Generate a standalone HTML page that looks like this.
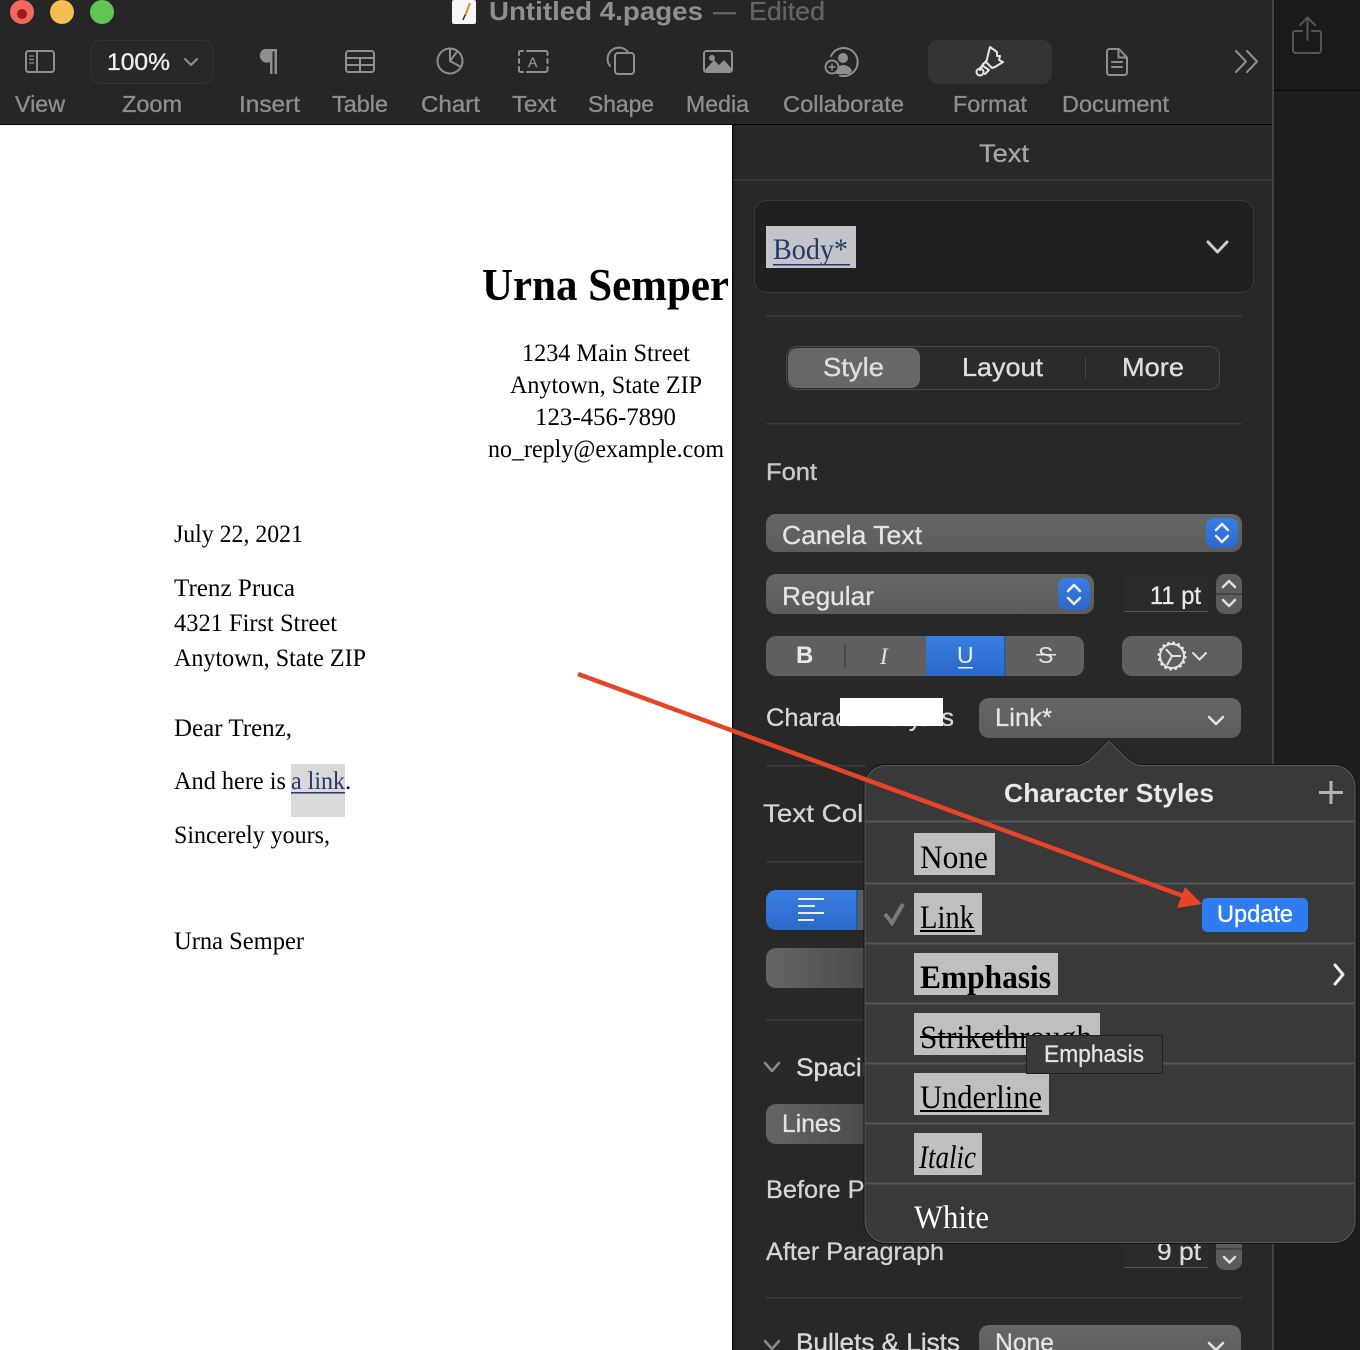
<!DOCTYPE html>
<html><head><meta charset="utf-8"><style>
html,body{margin:0;padding:0;background:#222;width:1360px;height:1350px;overflow:hidden}
svg{display:block}
.s{font-family:"Liberation Sans",sans-serif}
.r{font-family:"Liberation Serif",serif}
.i{fill:none;stroke:#8f8f8f;stroke-width:2;stroke-linecap:round;stroke-linejoin:round}
</style></head><body>
<svg width="1360" height="1350" viewBox="0 0 1360 1350" xmlns="http://www.w3.org/2000/svg">
<defs>
<linearGradient id="fade" x1="0" x2="1" y1="0" y2="0"><stop offset="0" stop-color="#656565"/><stop offset="1" stop-color="#484848"/></linearGradient>
<linearGradient id="blue" x1="0" x2="0" y1="0" y2="1"><stop offset="0" stop-color="#3a7ee2"/><stop offset="1" stop-color="#2a69c8"/></linearGradient>
<linearGradient id="ctl" x1="0" x2="0" y1="0" y2="1"><stop offset="0" stop-color="#666"/><stop offset="1" stop-color="#5c5c5c"/></linearGradient>
</defs>
<!-- backgrounds -->
<rect width="1360" height="1350" fill="#1f1f1f"/>
<rect x="1274" y="0" width="86" height="90" fill="#1a1a1a"/>
<rect x="1274" y="90" width="86" height="1" fill="#050505"/>
<rect x="1274" y="91" width="86" height="1259" fill="#1e1e1e"/>
<rect x="0" y="0" width="1273" height="124" fill="#262626"/>
<rect x="0" y="124" width="1273" height="1.5" fill="#050505"/>
<rect x="0" y="125" width="732" height="1225" fill="#fff"/>
<rect x="732" y="125" width="541" height="1225" fill="#282828"/>
<rect x="732" y="125" width="1.5" height="1225" fill="#0a0a0a"/>
<rect x="1272" y="0" width="2" height="1350" fill="#454545"/>

<!-- traffic lights -->
<circle cx="22" cy="12" r="12" fill="#f06a5f"/><circle cx="22" cy="14" r="5" fill="#9c1c12"/>
<circle cx="62" cy="12" r="12" fill="#f6bd50"/>
<circle cx="102" cy="12" r="12" fill="#61c554"/>
<!-- title -->
<rect x="452" y="0" width="24" height="24" rx="2" fill="#f6f6f6"/>
<path d="M465 16 L470 3" stroke="#e08a2c" stroke-width="2"/><path d="M463 20 L465 15" stroke="#333" stroke-width="1.5"/>
<g class="s">
<text x="489" y="20" font-size="26" font-weight="700" fill="#8f8f8f" textLength="214" lengthAdjust="spacingAndGlyphs">Untitled 4.pages</text>
<rect x="713" y="12" width="23" height="2.5" fill="#5e5e5e"/>
<text x="749" y="20" font-size="26" fill="#636363" stroke="#636363" stroke-width=".3" textLength="76" lengthAdjust="spacingAndGlyphs">Edited</text>
</g>

<!-- toolbar boxes -->
<rect x="90.500" y="40.500" width="123" height="43" rx="10" fill="#282828" stroke="#343434"/>
<rect x="928" y="40" width="124" height="44" rx="10" fill="#343434"/>
<g class="s">
<text x="107" y="70" font-size="24" fill="#eee" stroke="#eee" stroke-width=".35" textLength="63" lengthAdjust="spacingAndGlyphs">100%</text>
<g font-size="23" fill="#8e8e8e" stroke="#8e8e8e" stroke-width=".35">
<text x="15" y="112" textLength="50" lengthAdjust="spacingAndGlyphs">View</text>
<text x="122" y="112" textLength="60" lengthAdjust="spacingAndGlyphs">Zoom</text>
<text x="239" y="112" textLength="61" lengthAdjust="spacingAndGlyphs">Insert</text>
<text x="332" y="112" textLength="56" lengthAdjust="spacingAndGlyphs">Table</text>
<text x="421" y="112" textLength="59" lengthAdjust="spacingAndGlyphs">Chart</text>
<text x="512" y="112" textLength="44" lengthAdjust="spacingAndGlyphs">Text</text>
<text x="588" y="112" textLength="66" lengthAdjust="spacingAndGlyphs">Shape</text>
<text x="686" y="112" textLength="63" lengthAdjust="spacingAndGlyphs">Media</text>
<text x="783" y="112" textLength="121" lengthAdjust="spacingAndGlyphs">Collaborate</text>
<text x="953" y="112" textLength="74" lengthAdjust="spacingAndGlyphs">Format</text>
<text x="1062" y="112" textLength="107" lengthAdjust="spacingAndGlyphs">Document</text>
</g></g>

<!-- toolbar icons -->
<g class="i">
<rect x="26" y="51" width="28" height="21" rx="2.500"/><path d="M37 51V72"/><path d="M29.500 56h4M29.500 59.500h4M29.500 63h4" stroke-width="1.300"/>
<path d="M185 59l6 6 6-6"/>
<rect x="346" y="51" width="28" height="21" rx="2.500"/><path d="M346 58h28M346 65h28M360 58v14"/>
<circle cx="450" cy="61" r="12.500"/><path d="M450 61V48.500M450 61l11 6M450 61l7.500-10"/>
<path d="M523 51h-2.500a1.500 1.500 0 0 0-1.500 1.500V55M519 59v4M519 67v3.500a1.500 1.500 0 0 0 1.500 1.500H523M527 51h18.500a2 2 0 0 1 2 2V55M547.500 59v4M547.500 67v3a2 2 0 0 1-2 2H527" />
<path d="M610 66a11 11 0 1 1 18-14"/><rect x="615" y="53" width="19" height="21" rx="3"/>
<rect x="704" y="51" width="28" height="21" rx="2.500"/>
<path d="M1107 51.500a2.500 2.500 0 0 1 2.500-2.500H1119l8 8.500v15a2.500 2.500 0 0 1-2.500 2.500h-15a2.500 2.500 0 0 1-2.500-2.500ZM1118.500 49v8.500h8.500M1112 62h10M1112 67h10"/>
<path d="M1236 51l10 10.500-10 10.500M1247 51l10 10.500-10 10.500"/>
</g>
<path d="M264 49h13v25h-2.500V51.500h-2V74H270V62a6.500 6.500 0 0 1 -6-13Z" fill="#8f8f8f"/>
<text class="s" x="528" y="67" font-size="14" fill="#8f8f8f" stroke="#8f8f8f" stroke-width=".3">A</text>
<path d="M705 70l9-10 5 5 5-5 7 8v3h-26Z" fill="#8f8f8f"/><circle cx="712" cy="58" r="3" fill="#8f8f8f"/>
<g class="i"><path d="M831 56a14 14 0 1 1 9 19.500"/></g>
<circle cx="843" cy="58" r="5" fill="#8f8f8f"/><path d="M836 74c0-6 4-9 7-9s8 2 9 6l-3 3Z" fill="#8f8f8f"/>
<circle cx="832" cy="67" r="6.500" fill="#262626" stroke="#8f8f8f" stroke-width="2"/><path d="M832 63.500v7M828.500 67h7" stroke="#8f8f8f" stroke-width="1.500"/>
<g fill="none" stroke="#e6e6e6" stroke-width="2" stroke-linejoin="round" stroke-linecap="round">
<path d="M990 47l-3 12-1 3 6 6 3-1 8-5-4-2 1-4-3 0 0-4ZM986 62l-3 2-3 6"/><path d="M987 60l-7 8"/><circle cx="980" cy="72" r="3.500"/><path d="M983 66l6 4-4 4"/>
</g>
<g fill="none" stroke="#555" stroke-width="2" stroke-linecap="round" stroke-linejoin="round">
<path d="M1302 31h-7a2 2 0 0 0-2 2v17a3 3 0 0 0 3 3h22a3 3 0 0 0 3-3V33a2 2 0 0 0-2-2h-7M1307.500 40V18M1300 25l7.500-7.500 7.500 7.500"/>
</g>

<!-- document -->
<g class="r" fill="#000">
<text x="482" y="300" font-size="46" font-weight="700" textLength="247" lengthAdjust="spacingAndGlyphs">Urna Semper</text>
<g font-size="25">
<text x="522" y="361" textLength="168" lengthAdjust="spacingAndGlyphs">1234 Main Street</text>
<text x="510" y="393" textLength="192" lengthAdjust="spacingAndGlyphs">Anytown, State ZIP</text>
<text x="535" y="425" textLength="141" lengthAdjust="spacingAndGlyphs">123-456-7890</text>
<text x="488" y="457" textLength="236" lengthAdjust="spacingAndGlyphs">no_reply@example.com</text>
<text x="174" y="542" textLength="129" lengthAdjust="spacingAndGlyphs">July 22, 2021</text>
<text x="174" y="596" textLength="121" lengthAdjust="spacingAndGlyphs">Trenz Pruca</text>
<text x="174" y="631" textLength="163" lengthAdjust="spacingAndGlyphs">4321 First Street</text>
<text x="174" y="666" textLength="192" lengthAdjust="spacingAndGlyphs">Anytown, State ZIP</text>
<text x="174" y="736" textLength="118" lengthAdjust="spacingAndGlyphs">Dear Trenz,</text>
<rect x="291" y="764" width="54" height="53" fill="#d9d9d9"/>
<text x="174" y="789" textLength="112" lengthAdjust="spacingAndGlyphs">And here is</text>
<text x="291" y="789" fill="#25386b" textLength="54" lengthAdjust="spacingAndGlyphs">a link</text>
<rect x="291" y="792" width="54" height="1.500" fill="#25386b"/>
<text x="345" y="789">.</text>
<text x="174" y="843" textLength="156" lengthAdjust="spacingAndGlyphs">Sincerely yours,</text>
<text x="174" y="949" textLength="130" lengthAdjust="spacingAndGlyphs">Urna Semper</text>
</g></g>

<!-- sidebar -->
<g class="s">
<text x="979" y="162" font-size="25" fill="#a6a6a6" stroke="#a6a6a6" stroke-width=".3" textLength="50" lengthAdjust="spacingAndGlyphs">Text</text>
<rect x="733" y="179" width="540" height="1.500" fill="#3b3b3b"/>
<rect x="754.500" y="200.500" width="499" height="92" rx="12" fill="#202020" stroke="#3a3a3a"/>
<rect x="766" y="226" width="90" height="42" fill="#c3c5ca"/>
<text x="773" y="259" font-size="30" fill="#25386b" style="font-family:'Liberation Serif',serif" textLength="75" lengthAdjust="spacingAndGlyphs">Body*</text>
<rect x="773" y="264" width="77" height="1.500" fill="#25386b"/>
<path d="M1208 242l9.500 10 9.500-10" fill="none" stroke="#ccc" stroke-width="3" stroke-linecap="round" stroke-linejoin="round"/>
<rect x="766" y="315" width="476" height="1.500" fill="#3b3b3b"/>

<rect x="786.500" y="346.500" width="433" height="43" rx="10" fill="#2b2b2b" stroke="#4a4a4a"/>
<rect x="788" y="348" width="132" height="40" rx="9" fill="#676767"/>
<rect x="1085" y="357" width="1" height="22" fill="#444"/>
<g font-size="26" fill="#dedede" stroke="#dedede" stroke-width=".35">
<text x="823" y="376" textLength="61" lengthAdjust="spacingAndGlyphs">Style</text>
<text x="962" y="376" textLength="81" lengthAdjust="spacingAndGlyphs">Layout</text>
<text x="1122" y="376" textLength="62" lengthAdjust="spacingAndGlyphs">More</text>
</g>
<rect x="766" y="423" width="476" height="1.500" fill="#3b3b3b"/>
<g stroke-width=".4">
<text x="766" y="480" font-size="24" fill="#c8c8c8" stroke="#c8c8c8" textLength="51" lengthAdjust="spacingAndGlyphs">Font</text>
</g>

<rect x="766" y="514" width="476" height="38" rx="10" fill="url(#ctl)"/>
<text x="782" y="544" font-size="26" fill="#e4e4e4" stroke="#e4e4e4" stroke-width=".3" textLength="140" lengthAdjust="spacingAndGlyphs">Canela Text</text>
<rect x="1206" y="518" width="32" height="30" rx="8" fill="url(#blue)"/>
<path d="M1216 530l6-6 6 6M1216 536l6 6 6-6" fill="none" stroke="#eee" stroke-width="2.500" stroke-linecap="round" stroke-linejoin="round"/>

<rect x="766" y="574" width="328" height="40" rx="10" fill="url(#ctl)"/>
<text x="782" y="605" font-size="26" fill="#e4e4e4" stroke="#e4e4e4" stroke-width=".3" textLength="92" lengthAdjust="spacingAndGlyphs">Regular</text>
<rect x="1058" y="578" width="32" height="32" rx="8" fill="url(#blue)"/>
<path d="M1068 591l6-6 6 6M1068 598l6 6 6-6" fill="none" stroke="#eee" stroke-width="2.500" stroke-linecap="round" stroke-linejoin="round"/>

<rect x="1124" y="576" width="84" height="36" fill="#2b2b2b"/><rect x="1124" y="611" width="84" height="1" fill="#555"/>
<text x="1150" y="604" font-size="25" fill="#eaeaea" stroke="#eaeaea" stroke-width=".3" textLength="51" lengthAdjust="spacingAndGlyphs">11 pt</text>
<rect x="1216" y="574" width="26" height="40" rx="9" fill="#5c5c5c"/><rect x="1216" y="593" width="26" height="2" fill="#444"/>
<path d="M1223 587l6-6 6 6M1223 600l6 6 6-6" fill="none" stroke="#ddd" stroke-width="2.500" stroke-linecap="round" stroke-linejoin="round"/>

<rect x="766" y="636" width="318" height="40" rx="10" fill="#5f5f5f"/>
<rect x="926" y="636" width="79" height="40" fill="url(#blue)"/>
<rect x="1004" y="636" width="1.500" height="40" fill="#2458a8"/>
<rect x="844" y="644" width="2" height="24" fill="#4a4a4a"/>
<text x="796" y="663" font-size="24" font-weight="700" fill="#e8e8e8">B</text>
<text x="880" y="664" font-size="23" font-style="italic" fill="#e4e4e4" style="font-family:'Liberation Serif',serif">I</text>
<text x="957" y="663" font-size="23" fill="#e8eefc">U</text><rect x="958" y="667" width="15" height="1.500" fill="#e8eefc"/>
<text x="1038" y="663" font-size="23" fill="#e4e4e4">S</text><rect x="1036" y="654" width="20" height="1.500" fill="#e4e4e4"/>

<rect x="1122" y="636" width="120" height="40" rx="10" fill="#5f5f5f"/>
<circle cx="1172" cy="656" r="12" fill="none" stroke="#e4e4e4" stroke-width="2"/>
<circle cx="1172" cy="656" r="13" fill="none" stroke="#e4e4e4" stroke-width="3" stroke-dasharray="2.500 2.600"/>
<path d="M1172 656l-6-7M1172 656l9 0M1172 656l-5 9" stroke="#e4e4e4" stroke-width="2"/>
<path d="M1193 653l6.500 6.500 6.500-6.500" fill="none" stroke="#e4e4e4" stroke-width="2" stroke-linecap="round" stroke-linejoin="round"/>

<text x="766" y="726" font-size="25" fill="#d8d8d8" stroke="#d8d8d8" stroke-width=".3" textLength="188" lengthAdjust="spacingAndGlyphs">Character Styles</text>
<rect x="840" y="698" width="103" height="28" fill="#fff"/>
<rect x="979" y="698" width="262" height="40" rx="10" fill="url(#ctl)"/>
<text x="995" y="726" font-size="25" fill="#e4e4e4" stroke="#e4e4e4" stroke-width=".3" textLength="57" lengthAdjust="spacingAndGlyphs">Link*</text>
<path d="M1209 717l7 7 7-7" fill="none" stroke="#e4e4e4" stroke-width="2.500" stroke-linecap="round" stroke-linejoin="round"/>
<rect x="766" y="765" width="100" height="1.500" fill="#3b3b3b"/>

<text x="763" y="822" font-size="25" fill="#d4d4d4" stroke="#d4d4d4" stroke-width=".3" textLength="125" lengthAdjust="spacingAndGlyphs">Text Color</text>
<rect x="766" y="861" width="100" height="1.500" fill="#3b3b3b"/>
<rect x="766" y="890" width="120" height="40" rx="10" fill="url(#blue)"/>
<rect x="857" y="890" width="30" height="40" fill="#5d5d5d"/><rect x="856" y="890" width="2" height="40" fill="#2458a8"/>
<path d="M798 899h26M798 906h17M798 913h26M798 920h16" stroke="#eee" stroke-width="2"/>
<rect x="766" y="948" width="110" height="40" rx="10" fill="url(#fade)"/>
<rect x="766" y="1019" width="100" height="1.500" fill="#3b3b3b"/>
<path d="M765 1063l7 8 7-8" fill="none" stroke="#8a8a8a" stroke-width="2.500" stroke-linecap="round" stroke-linejoin="round"/>
<text x="796" y="1076" font-size="25" fill="#d8d8d8" stroke="#d8d8d8" stroke-width=".4" textLength="95" lengthAdjust="spacingAndGlyphs">Spacing</text>
<rect x="766" y="1104" width="110" height="40" rx="10" fill="url(#fade)"/>
<text x="782" y="1132" font-size="25" fill="#e4e4e4" stroke="#e4e4e4" stroke-width=".3" textLength="59" lengthAdjust="spacingAndGlyphs">Lines</text>
<text x="766" y="1198" font-size="25" fill="#d4d4d4" stroke="#d4d4d4" stroke-width=".3" textLength="200" lengthAdjust="spacingAndGlyphs">Before Paragraph</text>
<text x="766" y="1260" font-size="25" fill="#d4d4d4" stroke="#d4d4d4" stroke-width=".3" textLength="178" lengthAdjust="spacingAndGlyphs">After Paragraph</text>
<rect x="1124" y="1235" width="84" height="32" fill="#2b2b2b"/><rect x="1124" y="1267" width="84" height="1" fill="#555"/>
<text x="1157" y="1260" font-size="25" fill="#dcdcdc" stroke="#dcdcdc" stroke-width=".3" textLength="44" lengthAdjust="spacingAndGlyphs">9 pt</text>
<rect x="1216" y="1235" width="26" height="35" rx="9" fill="#5c5c5c"/>
<rect x="1216" y="1248" width="26" height="2" fill="#444"/>
<path d="M1224 1257l5.500 5.500 5.500-5.500" fill="none" stroke="#ddd" stroke-width="2.500" stroke-linecap="round" stroke-linejoin="round"/>
<rect x="766" y="1297" width="476" height="1.500" fill="#3b3b3b"/>
<path d="M765 1341l7 8 7-8" fill="none" stroke="#8a8a8a" stroke-width="2.500" stroke-linecap="round" stroke-linejoin="round"/>
<text x="796" y="1351" font-size="25" fill="#d8d8d8" stroke="#d8d8d8" stroke-width=".4" textLength="164" lengthAdjust="spacingAndGlyphs">Bullets &amp; Lists</text>
<rect x="979" y="1325" width="262" height="40" rx="10" fill="url(#ctl)"/>
<text x="995" y="1351" font-size="25" fill="#e4e4e4" stroke="#e4e4e4" stroke-width=".3" textLength="59" lengthAdjust="spacingAndGlyphs">None</text>
<path d="M1209 1343l7 7 7-7" fill="none" stroke="#e4e4e4" stroke-width="2.500" stroke-linecap="round" stroke-linejoin="round"/>
</g>

<!-- popover -->
<path d="M886 764.500H1076C1088 764.500 1096 752 1109 740C1122 752 1130 764.500 1142 764.500H1334A22 22 0 0 1 1356 786.500V1221.500A22 22 0 0 1 1334 1243.500H886A22 22 0 0 1 864 1221.500V786.500A22 22 0 0 1 886 764.500Z" fill="#393939" stroke="#111" stroke-width="1"/>
<path d="M886 765.500H1076C1088 765.500 1096 753 1109 741C1122 753 1130 765.500 1142 765.500H1334A21 21 0 0 1 1355 786.500V1221.500A21 21 0 0 1 1334 1242.500H886A21 21 0 0 1 865 1221.500V786.500A21 21 0 0 1 886 765.500Z" fill="none" stroke="#5a5a5a" stroke-width="1"/>
<g fill="#555">
<rect x="865" y="820.500" width="490" height="2"/>
<rect x="865" y="882.500" width="490" height="2"/>
<rect x="865" y="942.500" width="490" height="2"/>
<rect x="865" y="1002.500" width="490" height="2"/>
<rect x="865" y="1062.500" width="490" height="2"/>
<rect x="865" y="1122.500" width="490" height="2"/>
<rect x="865" y="1182.500" width="490" height="2"/>
</g>
<text class="s" x="1004" y="802" font-size="26" font-weight="700" fill="#e8e8e8" textLength="210" lengthAdjust="spacingAndGlyphs">Character Styles</text>
<path d="M1331 781v23M1319 792.500h24" stroke="#b4b4b4" stroke-width="3"/>
<g fill="#bfbfbf">
<rect x="914" y="833" width="81" height="42"/>
<rect x="914" y="893" width="68" height="42"/>
<rect x="914" y="953" width="144" height="42"/>
<rect x="914" y="1013" width="186" height="42"/>
<rect x="914" y="1073" width="135" height="42"/>
<rect x="914" y="1133" width="68" height="42"/>
</g>
<path d="M885 914l7 9 11-19" fill="none" stroke="#7a7a7a" stroke-width="4"/>
<g class="r" font-size="33" fill="#000">
<text x="920" y="868" textLength="68" lengthAdjust="spacingAndGlyphs">None</text>
<text x="920" y="928" textLength="54" lengthAdjust="spacingAndGlyphs">Link</text>
<rect x="920" y="930" width="55" height="2" fill="#000"/>
<text x="920" y="988" font-weight="700" textLength="131" lengthAdjust="spacingAndGlyphs">Emphasis</text>
<text x="920" y="1048" textLength="172" lengthAdjust="spacingAndGlyphs">Strikethrough</text>
<rect x="920" y="1036" width="172" height="2" fill="#000"/>
<text x="920" y="1108" textLength="122" lengthAdjust="spacingAndGlyphs">Underline</text>
<rect x="920" y="1110" width="122" height="2" fill="#000"/>
<text x="919" y="1168" font-style="italic" textLength="57" lengthAdjust="spacingAndGlyphs">Italic</text>
<text x="914" y="1228" fill="#fff" textLength="75" lengthAdjust="spacingAndGlyphs">White</text>
</g>
<rect x="1202" y="898" width="106" height="34" rx="5" fill="#2f7bf0"/>
<text class="s" x="1217" y="922" font-size="24" fill="#fff" stroke="#fff" stroke-width=".3" textLength="76" lengthAdjust="spacingAndGlyphs">Update</text>
<path d="M1335 965l8 9.500-8 9.500" fill="none" stroke="#eee" stroke-width="3" stroke-linecap="round" stroke-linejoin="round"/>
<!-- tooltip -->
<rect x="1026.500" y="1035.500" width="136" height="38" fill="#3a3a3a" stroke="#1f1f1f"/>
<text class="s" x="1044" y="1062" font-size="24" fill="#e4e4e4" stroke="#e4e4e4" stroke-width=".3" textLength="100" lengthAdjust="spacingAndGlyphs">Emphasis</text>

<!-- red arrow -->
<path d="M578 674L1186 897" stroke="#e8442a" stroke-width="4.500"/>
<path d="M1202 904L1185 887L1177 908Z" fill="#e8442a"/>
</svg>
</body></html>
